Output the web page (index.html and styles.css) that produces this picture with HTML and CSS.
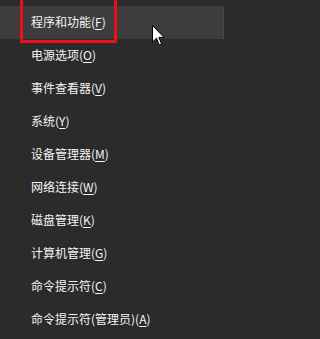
FILE: index.html
```html
<!DOCTYPE html>
<html>
<head>
<meta charset="utf-8">
<link rel="stylesheet" href="styles.css">
</head>
<body>
<ul class="menu">
  <li class="item active">程序和功能(<u>F</u>)</li>
  <li class="item">电源选项(<u>O</u>)</li>
  <li class="item">事件查看器(<u>V</u>)</li>
  <li class="item">系统(<u>Y</u>)</li>
  <li class="item">设备管理器(<u>M</u>)</li>
  <li class="item">网络连接(<u>W</u>)</li>
  <li class="item">磁盘管理(<u>K</u>)</li>
  <li class="item">计算机管理(<u>G</u>)</li>
  <li class="item">命令提示符(<u>C</u>)</li>
  <li class="item">命令提示符(管理员)(<u>A</u>)</li>
</ul>
<div class="redbox"></div>
<svg class="cursor" width="13" height="22" viewBox="0 0 13 22">
  <path d="M0.5 0.5 L0.5 17 L4.5 13.2 L7.3 20 L9.6 19 L6.8 12.4 L12 12.4 Z" fill="#fff" stroke="#000" stroke-width="1"/>
</svg>
</body>
</html>
```
FILE: styles.css
```css
html, body {
  margin: 0;
  padding: 0;
  background: #2b2b2b;
  width: 227px;
  height: 339px;
  overflow: hidden;
}
.menu {
  list-style: none;
  margin: 0;
  padding: 6px 3px 0 0;
  font-family: "Noto Sans CJK SC", "Microsoft YaHei", sans-serif;
  font-size: 12px;
  color: #f4f4f4;
}
.item {
  height: 33px;
  line-height: 32px;
  padding-left: 31px;
  white-space: nowrap;
}
.item u {
  text-decoration-thickness: 1px;
  text-underline-offset: 2px;
}
.active {
  background: #3d3d3d;
  box-shadow: inset -1px 0 0 #4a4a4a;
}
.redbox {
  position: absolute;
  left: 20px;
  top: -3px;
  width: 91px;
  height: 40px;
  border: 3px solid #e8101a;
}
.cursor {
  position: absolute;
  left: 152px;
  top: 25px;
}
```
